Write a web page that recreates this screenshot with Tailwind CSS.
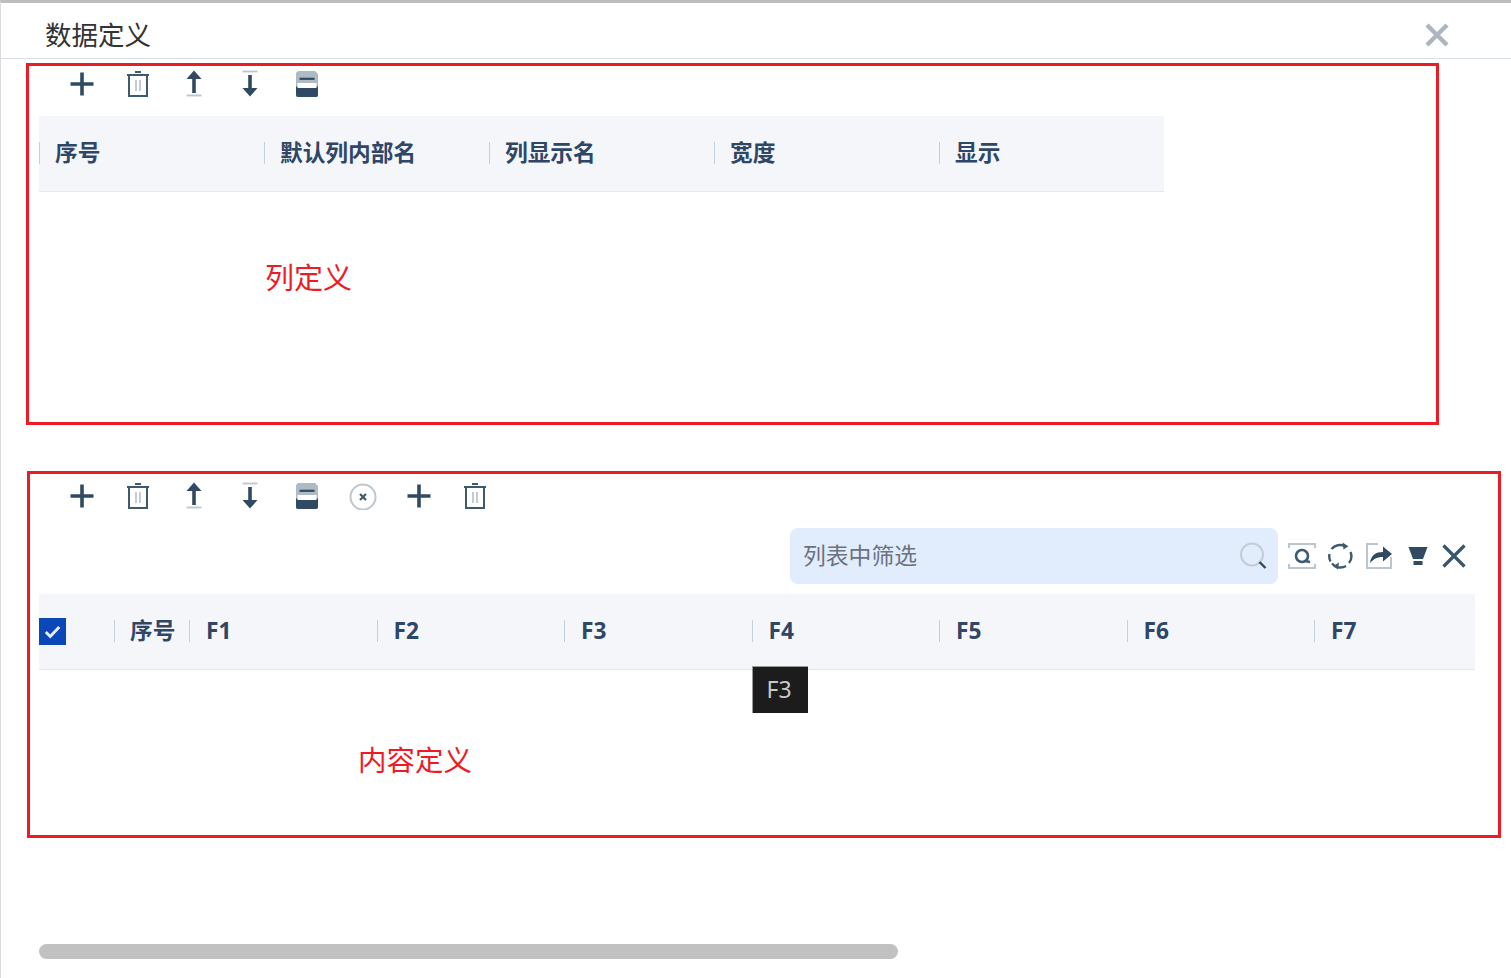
<!DOCTYPE html>
<html lang="zh-CN">
<head>
    <meta charset="UTF-8">
    <title>数据定义</title>
    <script src="https://cdn.jsdelivr.net/npm/@tailwindcss/browser@4"></script>
</head>
<body class="bg-white">
    <!-- shared toolbar icons -->
    <svg class="hidden">
        <symbol id="i-plus" viewBox="0 0 28 28"><path d="M2.500 14h23M14 2.500v23" fill="none" stroke="#2f4a62" stroke-width="3.600"/></symbol>
        <symbol id="i-trash" viewBox="0 0 28 28"><path d="M3 5h22M11 2h6" stroke="#3f5a70" stroke-width="1.800" fill="none"/><rect x="5" y="5" width="18" height="21" fill="none" stroke="#3f5a70" stroke-width="2"/><path d="M12 10v11M16 10v11" stroke="#bcc7d0" stroke-width="1.800"/></symbol>
        <symbol id="i-up" viewBox="0 0 28 28"><path d="M14 .5 21.500 9H6.500z" fill="#2f4a62"/><path d="M14 8v15" stroke="#2f4a62" stroke-width="3.600"/><path d="M6.500 25.500h15" stroke="#b9c6d0" stroke-width="1.800"/></symbol>
        <symbol id="i-down" viewBox="0 0 28 28"><path d="M6.500 1.500h15" stroke="#b9c6d0" stroke-width="1.800"/><path d="M14 5v15" stroke="#2f4a62" stroke-width="3.600"/><path d="M6.500 18h15L14 26.500z" fill="#2f4a62"/></symbol>
        <symbol id="i-save" viewBox="0 0 28 28"><g transform="translate(0 1)"><path d="M5 0h17l3 3v21a2 2 0 0 1-2 2H5a2 2 0 0 1-2-2V2z" fill="#aebac4"/><path d="M6.500 7.800h15" stroke="#2f4a62" stroke-width="2.200"/><path d="M3 15.500h22V24a2 2 0 0 1-2 2H5a2 2 0 0 1-2-2z" fill="#2f4a62"/><rect x="4.500" y="12" width="19" height="5" fill="#fff"/></g></symbol>
    </svg>

    <div class="w-[1511px] h-[978px] overflow-hidden border-t-[3px] border-l border-t-[#bdbdbd] border-l-[#dcdcdc] font-['Noto_Sans','Noto_Sans_CJK_SC',sans-serif]">
        <!-- Title bar -->
        <div class="h-[56px] pt-[9px] pl-[44px] pr-[61px] flex items-center justify-between border-b border-[#d8deea]">
            <span class="text-[26.500px] text-[#333] leading-none">数据定义</span>
            <svg class="-mt-px" width="26" height="26" viewBox="0 0 26 26"><path d="M3 3l20 20M23 3 3 23" stroke="#aeb4c0" stroke-width="4.400" fill="none"/></svg>
        </div>

        <!-- 列定义 -->
        <div class="ml-[25px] mt-[4px] w-[1413px] h-[362px] border-[3px] border-[#ed1c24]">
            <div class="h-[50px] pl-[25px] pt-[4px] flex items-start">
                <div class="w-[56px] flex justify-center"><svg class="w-[28px] h-[28px]"><use href="#i-plus"/></svg></div>
                <div class="w-[56px] flex justify-center"><svg class="w-[28px] h-[28px]"><use href="#i-trash"/></svg></div>
                <div class="w-[56px] flex justify-center"><svg class="w-[28px] h-[28px]"><use href="#i-up"/></svg></div>
                <div class="w-[56px] flex justify-center"><svg class="w-[28px] h-[28px]"><use href="#i-down"/></svg></div>
                <div class="w-[56px] ml-px flex justify-center"><svg class="w-[28px] h-[28px]"><use href="#i-save"/></svg></div>
            </div>
            <div class="ml-[10px] w-[1125px] h-[76px] flex items-center bg-[#f4f6fa] border-b border-[#e3e8ee] text-[22.700px] font-bold text-[#2f4667]">
                <div class="w-[225px] flex items-center gap-[15px]"><span class="w-px h-[22px] bg-[#c0d0de]"></span>序号</div>
                <div class="w-[225px] flex items-center gap-[15px]"><span class="w-px h-[22px] bg-[#c0d0de]"></span>默认列内部名</div>
                <div class="w-[225px] flex items-center gap-[15px]"><span class="w-px h-[22px] bg-[#c0d0de]"></span>列显示名</div>
                <div class="w-[225px] flex items-center gap-[15px]"><span class="w-px h-[22px] bg-[#c0d0de]"></span>宽度</div>
                <div class="w-[225px] flex items-center gap-[15px]"><span class="w-px h-[22px] bg-[#c0d0de]"></span>显示</div>
            </div>
            <div class="mt-[71px] ml-[236px] text-[29px] leading-[30px] text-[#ed1c24]">列定义</div>
        </div>

        <!-- 内容定义 -->
        <div class="ml-[26px] mt-[46px] w-[1474px] h-[367px] border-[3px] border-[#ed1c24]">
            <div class="h-[54px] pl-[24px] pt-[8px] flex items-start">
                <div class="w-[56px] flex justify-center"><svg class="w-[28px] h-[28px]"><use href="#i-plus"/></svg></div>
                <div class="w-[56px] flex justify-center"><svg class="w-[28px] h-[28px]"><use href="#i-trash"/></svg></div>
                <div class="w-[56px] flex justify-center"><svg class="w-[28px] h-[28px]"><use href="#i-up"/></svg></div>
                <div class="w-[56px] flex justify-center"><svg class="w-[28px] h-[28px]"><use href="#i-down"/></svg></div>
                <div class="w-[56px] ml-px flex justify-center"><svg class="w-[28px] h-[28px]"><use href="#i-save"/></svg></div>
                <div class="w-[56px] flex justify-center">
                    <svg width="28" height="28" viewBox="0 0 28 28"><circle cx="14" cy="15" r="12.500" fill="none" stroke="#bcc7d0" stroke-width="2"/><path d="M11 12l6 6M17 12l-6 6" stroke="#3f5a70" stroke-width="2.200"/></svg>
                </div>
                <div class="w-[56px] flex justify-center"><svg class="w-[28px] h-[28px]"><use href="#i-plus"/></svg></div>
                <div class="w-[56px] flex justify-center"><svg class="w-[28px] h-[28px]"><use href="#i-trash"/></svg></div>
            </div>

            <!-- Filter row -->
            <div class="h-[56px] pl-[760px] flex items-center">
                <div class="w-[488px] h-[56px] rounded-[8px] bg-[#e1ecfc] pl-[13px] pr-[11px] flex items-center justify-between">
                    <span class="text-[22.800px] text-[#6b7280]">列表中筛选</span>
                    <svg width="28" height="28" viewBox="0 0 28 28"><circle cx="13" cy="12.500" r="11" fill="none" stroke="#c3cdd5" stroke-width="2"/><path d="M20.500 20l6 6" stroke="#2f4a62" stroke-width="2.400"/></svg>
                </div>
                <svg class="ml-[10px]" width="28" height="28" viewBox="0 0 28 28"><path d="M1 6V2h26v4M1 22v4h26v-4" fill="none" stroke="#b9c6d0" stroke-width="2"/><circle cx="14" cy="14" r="6" fill="none" stroke="#3f5a70" stroke-width="2.600"/><path d="M17 19l5 1" stroke="#3f5a70" stroke-width="2.400"/></svg>
                <svg class="ml-[10px]" width="28" height="28" viewBox="0 0 28 28"><path d="M5.500 7A11 11 0 0 1 19 4.200M24.500 10A11 11 0 0 1 23 21M20 24A11 11 0 0 1 6 21.500M4.500 19.500A11 11 0 0 1 3.500 12" fill="none" stroke="#3f5a70" stroke-width="2.400"/><path d="M16.500 .5l6 3.700-5 3.300zM13 20.500l-6 3.700 5 3.300z" fill="#3f5a70"/></svg>
                <svg class="ml-[11px]" width="28" height="28" viewBox="0 0 28 28"><path d="M13 2H2v24h24V15" fill="none" stroke="#b9c6d0" stroke-width="2"/><path d="M5 21c1-8 6-11 13-11V4.500l9 7.500-9 7.500V15c-5 0-9 1.500-13 6z" fill="#2f4a62"/></svg>
                <svg class="ml-[11px]" width="28" height="28" viewBox="0 0 28 28"><path d="M4.500 5h19l-4.500 12H9z" fill="#2f4a62"/><rect x="9.500" y="19" width="9" height="4" fill="#2f4a62"/></svg>
                <svg class="ml-[8px]" width="28" height="28" viewBox="0 0 28 28"><path d="M3.500 3.500l21 21M24.500 3.500l-21 21" stroke="#3a566c" stroke-width="3.200" fill="none"/></svg>
            </div>

            <!-- Table header -->
            <div class="relative mt-[10px] ml-[9px] w-[1436px] h-[76px] flex items-center bg-[#f4f6fa] border-b border-[#e3e8ee] text-[22.700px] font-bold text-[#2f4667]">
                <div class="w-[75px]">
                    <span class="w-[27px] h-[27px] bg-[#0b47b7] flex items-center justify-center">
                        <svg width="19" height="19" viewBox="0 0 17 17"><path d="M2.500 9l4 4 8-8.500" fill="none" stroke="#e8eefa" stroke-width="2.600"/></svg>
                    </span>
                </div>
                <div class="w-[75px] flex items-center gap-[15px]"><span class="w-px h-[22px] bg-[#c0d0de]"></span>序号</div>
                <div class="w-[187.500px] flex items-center gap-[16px]"><span class="w-px h-[22px] bg-[#c0d0de]"></span>F1</div>
                <div class="w-[187.500px] flex items-center gap-[16px]"><span class="w-px h-[22px] bg-[#c0d0de]"></span>F2</div>
                <div class="w-[187.500px] flex items-center gap-[16px]"><span class="w-px h-[22px] bg-[#c0d0de]"></span>F3</div>
                <div class="w-[187.500px] flex items-center gap-[16px]"><span class="w-px h-[22px] bg-[#c0d0de]"></span>F4</div>
                <div class="w-[187.500px] flex items-center gap-[16px]"><span class="w-px h-[22px] bg-[#c0d0de]"></span>F5</div>
                <div class="w-[187.500px] flex items-center gap-[16px]"><span class="w-px h-[22px] bg-[#c0d0de]"></span>F6</div>
                <div class="w-[161px] flex items-center gap-[16px]"><span class="w-px h-[22px] bg-[#c0d0de]"></span>F7</div>
                <!-- Tooltip -->
                <div class="absolute left-[713px] top-[72px] w-[56px] h-[47px] pr-[3px] pb-[2px] bg-[#1c1c1c] border-t border-l border-[#999] flex items-center justify-center text-[23px] font-normal text-[#c8c8c8]">F3</div>
            </div>
            <div class="mt-[75px] ml-[328px] text-[28.500px] leading-[30px] text-[#ed1c24]">内容定义</div>
        </div>

        <!-- Horizontal scrollbar -->
        <div class="mt-[106px] ml-[38px] w-[859px] h-[15px] rounded-full bg-[#c1c1c1]"></div>
    </div>
</body>
</html>
